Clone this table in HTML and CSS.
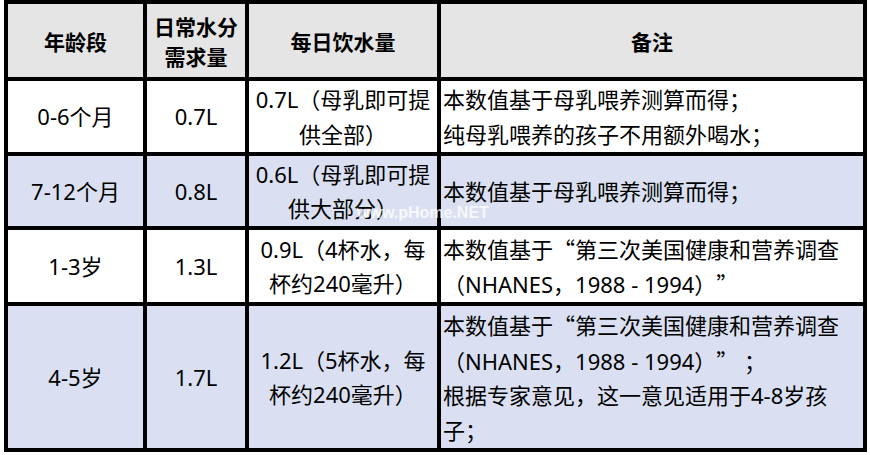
FILE: index.html
```html
<!DOCTYPE html>
<html lang="zh-CN">
<head>
<meta charset="utf-8">
<title>每日饮水量</title>
<link rel="stylesheet" href="styles.css">
</head>
<body>
<div class="sheet">
  <div class="cell head"><div>年龄段</div></div>
  <div class="cell head"><div>日常水分<br>需求量</div></div>
  <div class="cell head"><div>每日饮水量</div></div>
  <div class="cell head"><div>备注</div></div>

  <div class="cell"><div>0-6个月</div></div>
  <div class="cell"><div>0.7L</div></div>
  <div class="cell"><div>0.7L（母乳即可提<br>供全部）</div></div>
  <div class="cell note"><div>本数值基于母乳喂养测算而得；<br>纯母乳喂养的孩子不用额外喝水；</div></div>

  <div class="cell alt"><div>7-12个月</div></div>
  <div class="cell alt"><div>0.8L</div></div>
  <div class="cell alt"><div>0.6L（母乳即可提<br>供大部分）</div></div>
  <div class="cell alt note"><div>本数值基于母乳喂养测算而得；</div></div>

  <div class="cell"><div>1-3岁</div></div>
  <div class="cell"><div>1.3L</div></div>
  <div class="cell"><div>0.9L（4杯水，每<br>杯约240毫升）</div></div>
  <div class="cell note"><div>本数值基于<span class="q ql">“</span>第三次美国健康和营养调查<br>（NHANES，1988 - 1994）<span class="q qr">”</span></div></div>

  <div class="cell alt"><div>4-5岁</div></div>
  <div class="cell alt"><div>1.7L</div></div>
  <div class="cell alt"><div>1.2L（5杯水，每<br>杯约240毫升）</div></div>
  <div class="cell alt note"><div>本数值基于<span class="q ql">“</span>第三次美国健康和营养调查<br>（NHANES，1988 - 1994）<span class="q qr">”</span> ；<br>根据专家意见，这一意见适用于4-8岁孩<br>子；</div></div>

  <div class="watermark">www.pHome.NET</div>
</div>
</body>
</html>
```

FILE: styles.css
```css
html, body {
  margin: 0;
  padding: 0;
  background: #ffffff;
}

body {
  padding-left: 4px;
  font-family: "Noto Sans", "Noto Sans CJK SC", sans-serif;
  color: #000000;
}

.sheet {
  position: relative;
  display: grid;
  grid-template-columns: 135px 98px 188px 422px;
  grid-template-rows: 73px 71px 70px 72px 142px;
  gap: 4px;
  padding: 4px;
  background: #000000;
  width: max-content;
}

.cell {
  display: flex;
  align-items: center;
  justify-content: center;
  text-align: center;
  background: #ffffff;
  font-size: 22px;
  line-height: 34.5px;
  white-space: nowrap;
  overflow: hidden;
}

.cell.head {
  background: #e5e5e5;
  font-family: "Noto Sans CJK SC", sans-serif;
  font-weight: 700;
  font-size: 21px;
  line-height: 30px;
}

.cell.alt {
  background: #dae0f1;
}

.cell.note {
  justify-content: flex-start;
  text-align: left;
  padding-left: 2px;
}

.q {
  display: inline-block;
  width: 1em;
  font-family: "Noto Sans CJK SC", sans-serif;
}

.ql {
  text-align: right;
}

.qr {
  text-align: left;
}

.watermark {
  position: absolute;
  left: 353px;
  top: 203px;
  font-family: "Liberation Sans", sans-serif;
  font-weight: 700;
  font-size: 16px;
  line-height: 20px;
  color: rgba(255, 255, 255, 0.8);
  white-space: nowrap;
}
```
